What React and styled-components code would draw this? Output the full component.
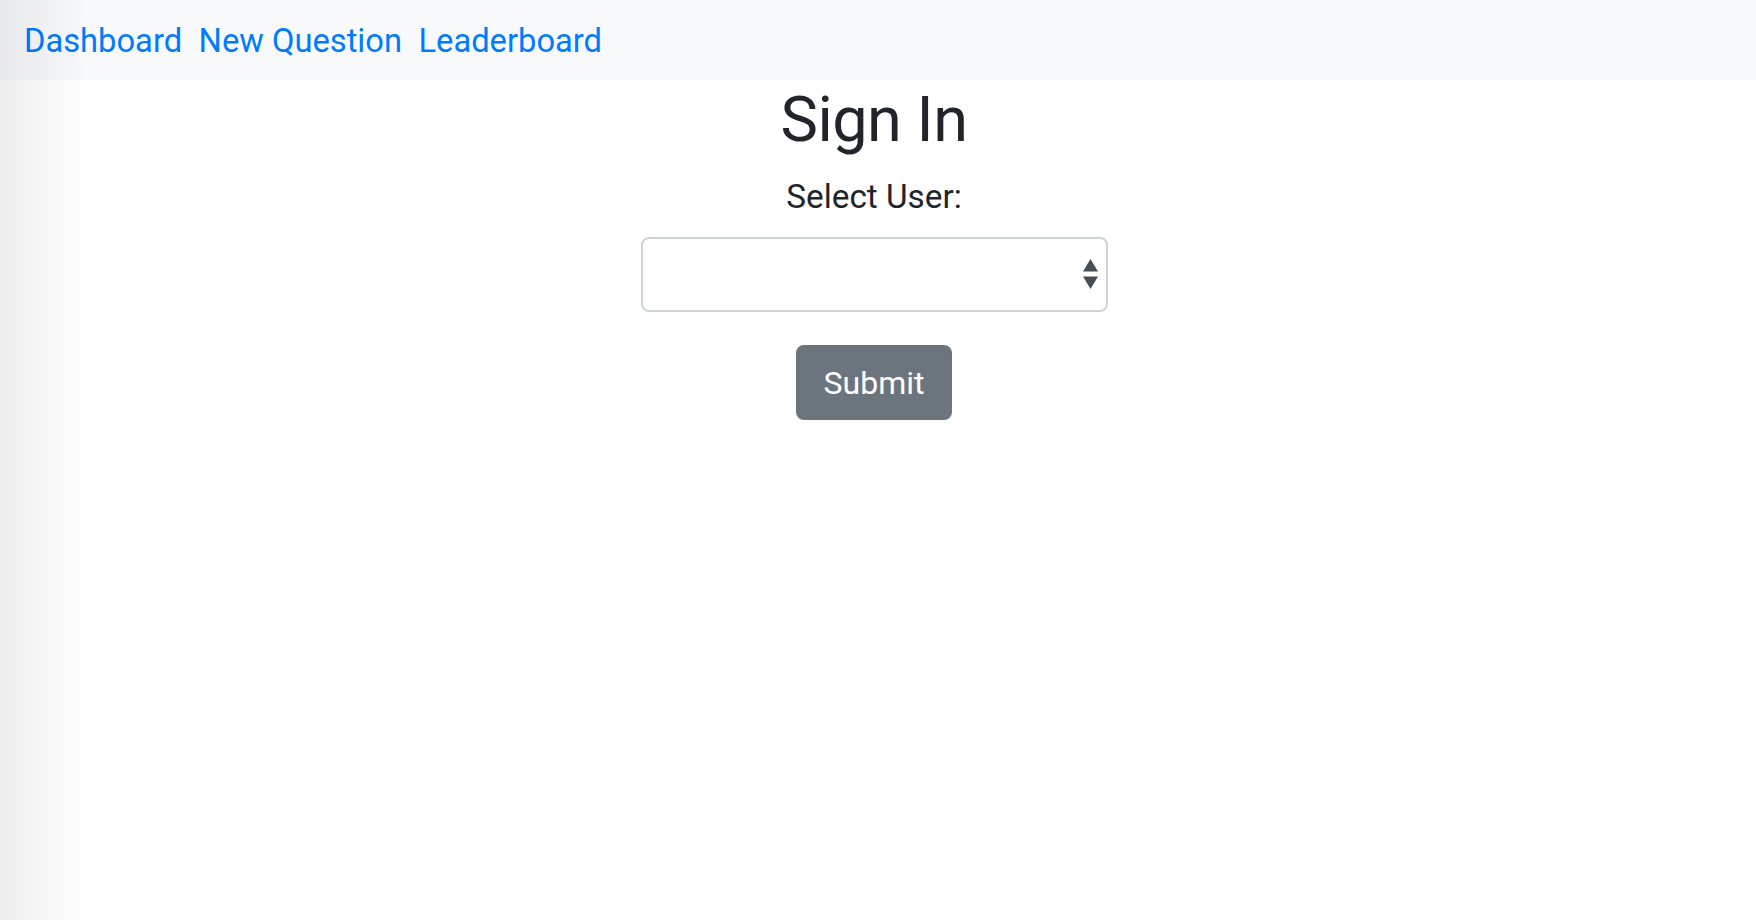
import React from 'react'
import styled, { createGlobalStyle } from 'styled-components'

const GlobalStyle = createGlobalStyle`
  * {
    box-sizing: border-box;
  }
  body {
    margin: 0;
    background: #fff;
    font-family: Roboto, 'Liberation Sans', Arial, sans-serif;
    color: #212529;
  }
`

const EdgeShade = styled.div`
  position: fixed;
  top: 0;
  left: 0;
  bottom: 0;
  width: 90px;
  pointer-events: none;
  background: linear-gradient(to right, rgba(0, 0, 0, 0.065), rgba(0, 0, 0, 0));
`

const NavBar = styled.nav`
  height: 80px;
  background: #f8f9fa;
  display: flex;
  align-items: flex-start;
  gap: 16.5px;
  padding: 17px 24px 0;
`

const NavLink = styled.a`
  font-size: 32.7px;
  line-height: 48px;
  color: #007bff;
  text-decoration: none;
  cursor: pointer;
`

const Main = styled.main`
  display: flex;
  flex-direction: column;
  align-items: center;
  padding: 2px 8px 0 0;
`

const Title = styled.h1`
  margin: 0;
  font-size: 63px;
  font-weight: 400;
  line-height: 76px;
  letter-spacing: -0.5px;
`

const Label = styled.label`
  margin-top: 15px;
  font-size: 33.3px;
  line-height: 48px;
`

const SelectWrap = styled.div`
  position: relative;
  margin-top: 16px;
  width: 467px;
  height: 75px;
`

const Select = styled.select`
  appearance: none;
  width: 100%;
  height: 100%;
  border: 2px solid #ced4da;
  border-radius: 8px;
  background: #fff;
  font-family: inherit;
  font-size: 32px;
  color: #495057;
  padding: 0 40px 0 20px;
  outline: none;
`

const Arrows = styled.svg`
  position: absolute;
  right: 10px;
  top: 22px;
  width: 15px;
  height: 30px;
  pointer-events: none;
`

const SubmitButton = styled.button`
  margin-top: 33px;
  width: 156px;
  height: 75px;
  border: none;
  border-radius: 8px;
  background: #6c757d;
  color: #fff;
  font-family: inherit;
  font-size: 32px;
  line-height: 1;
  cursor: pointer;
`

export default function App() {
  return (
    <>
      <GlobalStyle />
      <NavBar>
        <NavLink>Dashboard</NavLink>
        <NavLink>New Question</NavLink>
        <NavLink>Leaderboard</NavLink>
      </NavBar>
      <Main>
        <Title>Sign In</Title>
        <Label htmlFor='user'>Select User:</Label>
        <SelectWrap>
          <Select id='user' defaultValue=''>
            <option value='' disabled></option>
          </Select>
          <Arrows viewBox='0 0 15 30'>
            <path d='M7.5 0 L15 12.5 L0 12.5 Z' fill='#454d55' />
            <path d='M0 17.5 L15 17.5 L7.5 30 Z' fill='#454d55' />
          </Arrows>
        </SelectWrap>
        <SubmitButton type='button'>Submit</SubmitButton>
      </Main>
      <EdgeShade />
    </>
  )
}
